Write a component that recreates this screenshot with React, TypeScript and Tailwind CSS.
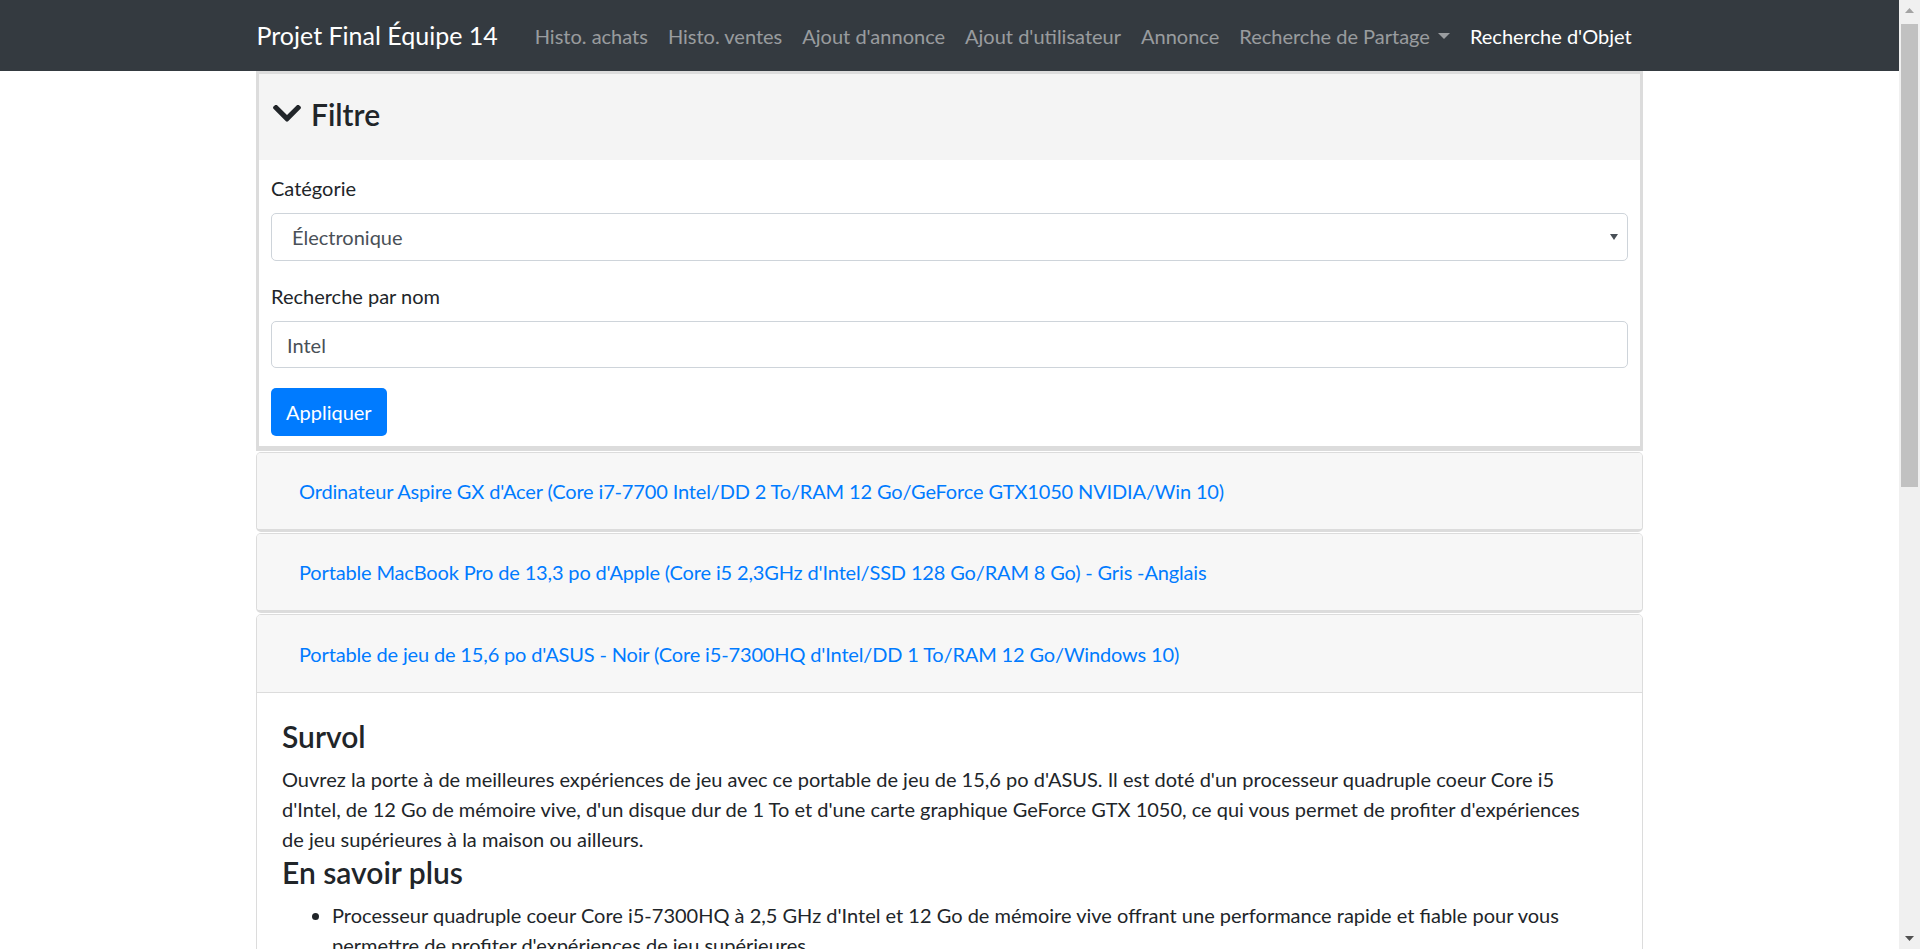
import React from 'react';

const navLinks = ['Histo. achats', 'Histo. ventes', "Ajout d'annonce", "Ajout d'utilisateur", 'Annonce'];

const results = [
  "Ordinateur Aspire GX d'Acer (Core i7-7700 Intel/DD 2 To/RAM 12 Go/GeForce GTX1050 NVIDIA/Win 10)",
  "Portable MacBook Pro de 13,3 po d'Apple (Core i5 2,3GHz d'Intel/SSD 128 Go/RAM 8 Go) - Gris -Anglais",
];

function ChevronDown() {
  return (
    <svg width="28" height="17" viewBox="5 130 438 262" className="shrink-0">
      <path
        fill="#212529"
        d="M207.029 381.476L12.686 187.132c-9.373-9.373-9.373-24.569 0-33.941l22.667-22.667c9.357-9.357 24.522-9.375 33.901-.04L224 284.505l154.745-154.021c9.379-9.335 24.544-9.317 33.901.04l22.667 22.667c9.373 9.373 9.373 24.569 0 33.941L240.971 381.476c-9.373 9.372-24.569 9.372-33.942 0z"
      />
    </svg>
  );
}

function Scrollbar() {
  return (
    <div className="w-[21px] shrink-0 bg-[#f0f0f0] flex flex-col items-center">
      <div className="h-[21px] w-full flex items-center justify-center">
        <svg width="9" height="5" viewBox="0 0 9 5">
          <path d="M0 5 L4.5 0 L9 5 Z" fill="#a3a3a3" />
        </svg>
      </div>
      <div className="mt-[3px] w-[17px] h-[463px] bg-[#c1c1c1]" />
      <div className="flex-1" />
      <div className="h-[21px] w-full flex items-center justify-center">
        <svg width="9" height="5" viewBox="0 0 9 5">
          <path d="M0 0 L9 0 L4.5 5 Z" fill="#505050" />
        </svg>
      </div>
    </div>
  );
}

function Navbar() {
  return (
    <nav className="h-[71px] bg-[#343a40]">
      <div className="w-[1386px] mx-auto h-full flex items-center">
        <span className="text-[25px] text-white mr-[27px] whitespace-nowrap">Projet Final Équipe 14</span>
        <ul className="flex items-center">
          {navLinks.map((l) => (
            <li key={l} className="px-[10px] text-white/50 whitespace-nowrap">{l}</li>
          ))}
          <li className="px-[10px] text-white/50 whitespace-nowrap flex items-center">
            Recherche de Partage
            <span className="ml-[8px] w-0 h-0 border-x-[6px] border-x-transparent border-t-[6px] border-t-white/50" />
          </li>
          <li className="px-[10px] text-white whitespace-nowrap">Recherche d'Objet</li>
        </ul>
      </div>
    </nav>
  );
}

function Filter() {
  return (
    <div className="border-[3px] border-b-[5px] border-[#dcdcdc]">
      <div className="h-[86px] bg-[#f4f4f4] flex items-center pl-[14px] pb-[7px] gap-[10px]">
        <ChevronDown />
        <h4 className="text-[30px] font-semibold leading-[1.2]">Filtre</h4>
      </div>
      <div className="bg-white pt-[13px] px-[12px] pb-[10px]">
        <label className="block mb-[10px]">Catégorie</label>
        <div className="relative mb-[20px]">
          <select
            defaultValue="elec"
            className="w-full h-[48px] appearance-none border border-[#ced4da] rounded-[5px] pl-[20px] text-[#495057] bg-white outline-none"
          >
            <option value="elec">Électronique</option>
          </select>
          <svg width="8" height="6" viewBox="0 0 8 6" className="absolute right-[10px] top-[21px]">
            <path d="M0 0 L8 0 L4 6 Z" fill="#495057" />
          </svg>
        </div>
        <label className="block mb-[10px]">Recherche par nom</label>
        <input
          defaultValue="Intel"
          className="block w-full h-[47px] border border-[#ced4da] rounded-[5px] px-[15px] text-[#495057] outline-none mb-[20px]"
        />
        <button className="h-[48px] px-[15px] rounded-[5px] bg-[#007bff] text-white">Appliquer</button>
      </div>
    </div>
  );
}

function ResultHeader({ title, open }: { title: string; open?: boolean }) {
  return (
    <div
      className={
        open
          ? 'h-[78px] bg-[#f7f7f7] flex items-center pl-[42px] border-b border-[#dcdcdc]'
          : 'h-[76px] bg-[#f7f7f7] flex items-center pl-[42px]'
      }
    >
      <a className="text-[#007bff] whitespace-nowrap tracking-[-0.15px]">{title}</a>
    </div>
  );
}

export default function App() {
  return (
    <div className="h-[949px] flex overflow-hidden bg-white font-['Lato',sans-serif] text-[20px] leading-[1.5] text-[#212529]">
      <div className="flex-1 overflow-hidden">
        <Navbar />
        <div className="w-[1387px] mx-auto">
          <Filter />
          {results.map((r) => (
            <div key={r} className="mt-[1px] border border-b-[3px] border-[#dcdcdc] rounded-[5px] overflow-hidden">
              <ResultHeader title={r} />
            </div>
          ))}
          <div className="mt-[1px] border border-[#dcdcdc] rounded-t-[5px] overflow-hidden">
            <ResultHeader
              open
              title="Portable de jeu de 15,6 po d'ASUS - Noir (Core i5-7300HQ d'Intel/DD 1 To/RAM 12 Go/Windows 10)"
            />
            <div className="bg-white py-[25px] pl-[25px] pr-[12px]">
              <h4 className="text-[30px] font-semibold leading-[1.2] mb-[10px]">Survol</h4>
              <p>
                Ouvrez la porte à de meilleures expériences de jeu avec ce portable de jeu de 15,6 po d'ASUS. Il est
                doté d'un processeur quadruple coeur Core i5
                <br />
                d'Intel, de 12 Go de mémoire vive, d'un disque dur de 1 To et d'une carte graphique GeForce GTX 1050,
                ce qui vous permet de profiter d'expériences
                <br />
                de jeu supérieures à la maison ou ailleurs.
              </p>
              <h4 className="text-[30px] font-semibold leading-[1.2] mb-[10px]">En savoir plus</h4>
              <ul className="list-disc pl-[50px]">
                <li>
                  Processeur quadruple coeur Core i5-7300HQ à 2,5 GHz d'Intel et 12 Go de mémoire vive offrant une
                  performance rapide et fiable pour vous
                  <br />
                  permettre de profiter d'expériences de jeu supérieures.
                </li>
                <li>
                  Écran de 15,6 po à DEL avec résolution HD intégrale de 1920 x 1080 pour des images nettes et
                  éclatantes.
                </li>
                <li>Carte graphique GeForce GTX 1050 de NVIDIA avec 4 Go de mémoire vidéo dédiée.</li>
              </ul>
            </div>
          </div>
        </div>
      </div>
      <Scrollbar />
    </div>
  );
}
